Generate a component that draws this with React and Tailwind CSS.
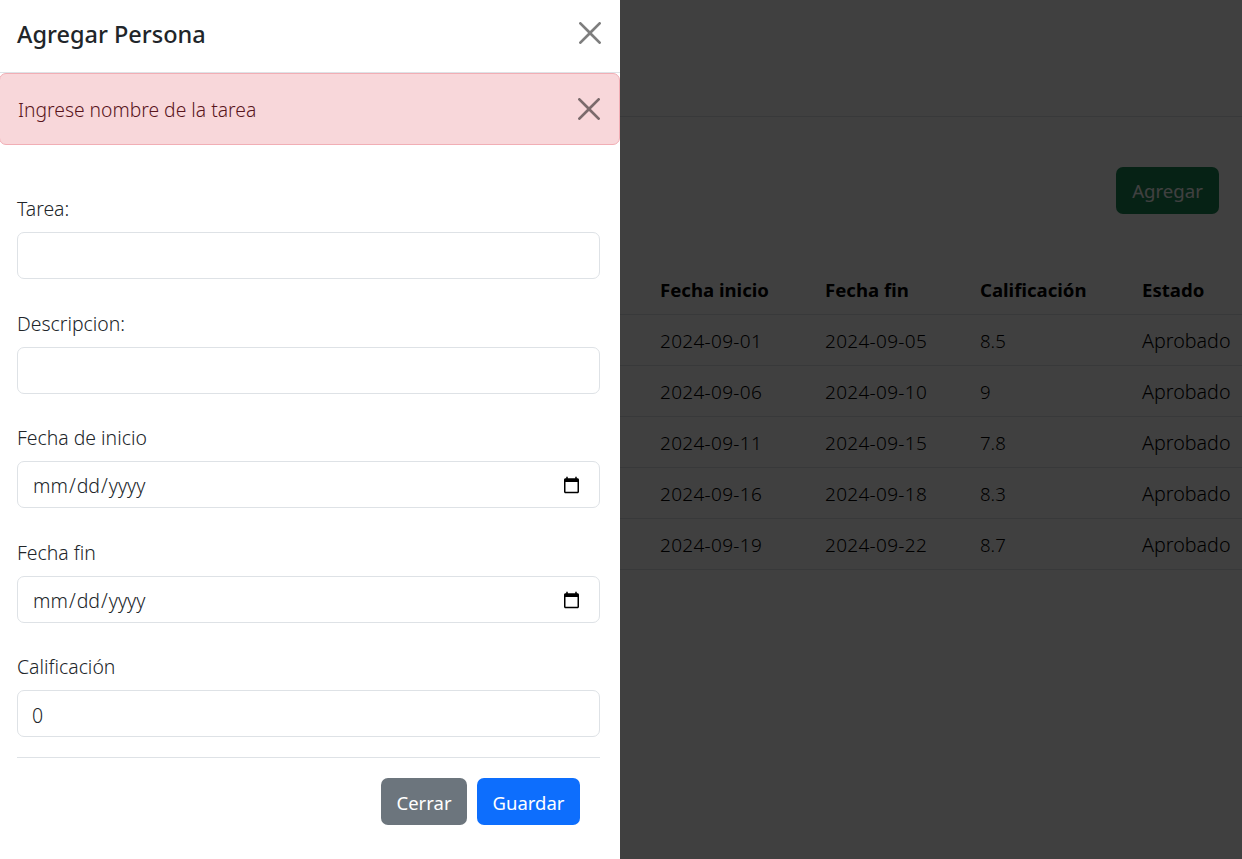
const FONT = "font-['Noto_Sans',sans-serif]"

const rows = [
  ['2024-09-01', '2024-09-05', '8.5', 'Aprobado'],
  ['2024-09-06', '2024-09-10', '9', 'Aprobado'],
  ['2024-09-11', '2024-09-15', '7.8', 'Aprobado'],
  ['2024-09-16', '2024-09-18', '8.3', 'Aprobado'],
  ['2024-09-19', '2024-09-22', '8.7', 'Aprobado'],
]

function CloseIcon() {
  return (
    <svg viewBox="0 0 16 16" className="w-[22px] h-[22px] opacity-50" fill="#000">
      <path d="M.293.293a1 1 0 0 1 1.414 0L8 6.586 14.293.293a1 1 0 1 1 1.414 1.414L9.414 8l6.293 6.293a1 1 0 0 1-1.414 1.414L8 9.414l-6.293 6.293a1 1 0 0 1-1.414-1.414L6.586 8 .293 1.707a1 1 0 0 1 0-1.414" />
    </svg>
  )
}

function Field({ label, type = 'text', value, className }) {
  return (
    <div className={className}>
      <label className="block text-[19.4px] font-light leading-[27px] pb-[11px] -mt-[1px] mb-[-1px] text-[#212529]">{label}</label>
      <input
        type={type}
        defaultValue={value}
        className="block w-full h-[47px] pl-[14px] pr-[16px] pt-[3px] text-[19.5px] font-light text-[#212529] bg-white border border-[#dee2e6] rounded-[7px]"
      />
    </div>
  )
}

export default function App() {
  return (
    <div className={`relative h-[859px] w-full overflow-hidden bg-white text-[18.6px] text-black ${FONT}`}>
      {/* page behind the backdrop */}
      <div className="h-[117px] border-b border-[#dee2e6]" />
      <div className="flex justify-end pt-[50px] pr-[23px]">
        <button className="h-[47px] w-[103px] rounded-[7px] bg-[#198754] text-white">Agregar</button>
      </div>
      <table className="mt-[49px] w-full table-fixed border-collapse">
        <thead>
          <tr className="h-[51px] border-b border-[#dee2e6] font-bold text-left">
            <th className="w-[660px]" />
            <th className="w-[165px] pt-[4px]">Fecha inicio</th>
            <th className="w-[155px] pt-[4px]">Fecha fin</th>
            <th className="w-[162px] pt-[4px]">Calificación</th>
            <th className="pt-[4px]">Estado</th>
          </tr>
        </thead>
        <tbody>
          {rows.map((r) => (
            <tr key={r[0]} className="h-[51px] border-b border-[#dee2e6]">
              <td />
              <td className="pt-[4px] text-[19px] tracking-[0.3px] font-light">{r[0]}</td>
              <td className="pt-[4px] text-[19px] tracking-[0.3px] font-light">{r[1]}</td>
              <td className="pt-[2px] font-light">{r[2]}</td>
              <td className="pt-[2px] text-[19.7px] font-light">{r[3]}</td>
            </tr>
          ))}
        </tbody>
      </table>

      {/* backdrop */}
      <div className="absolute inset-0 bg-black/75" />

      {/* offcanvas */}
      <div className="absolute left-0 top-0 bottom-0 w-[620px] bg-white text-[#212529]">
        <div className="h-[73px] flex items-center justify-between pl-[17px] pr-[19px] pb-[3px] border-b border-[#dee2e6]">
          <h5 className="text-[23.5px] font-medium">Agregar Persona</h5>
          <div className="-mt-[4px]">
            <CloseIcon />
          </div>
        </div>
        <div className="h-[72px] -ml-px flex items-center justify-between pl-[18px] pr-[19px] bg-[#f8d7da] border border-[#f1aeb5] rounded-[7px] text-[#58151c]">
          <span className="pt-[2px] text-[19.3px] font-light">Ingrese nombre de la tarea</span>
          <CloseIcon />
        </div>
        <form className="pl-[17px] pr-[20px] pt-[51px]">
          <Field label="Tarea:" />
          <Field label="Descripcion:" className="mt-[31.5px]" />
          <Field label="Fecha de inicio" type="date" className="mt-[31.5px]" />
          <Field label="Fecha fin" type="date" className="mt-[31.5px]" />
          <Field label="Calificación" type="number" value="0" className="mt-[31.5px]" />
          <div className="mt-[20px] pt-[20px] pr-[20px] border-t border-[#dee2e6] flex justify-end gap-[10px]">
            <button type="button" className="h-[47px] w-[86px] pt-[2px] rounded-[7px] bg-[#6c757d] text-[18.5px] text-white">Cerrar</button>
            <button type="button" className="h-[47px] w-[103px] pt-[2px] rounded-[7px] bg-[#0d6efd] text-[18.5px] text-white">Guardar</button>
          </div>
        </form>
      </div>
    </div>
  )
}
